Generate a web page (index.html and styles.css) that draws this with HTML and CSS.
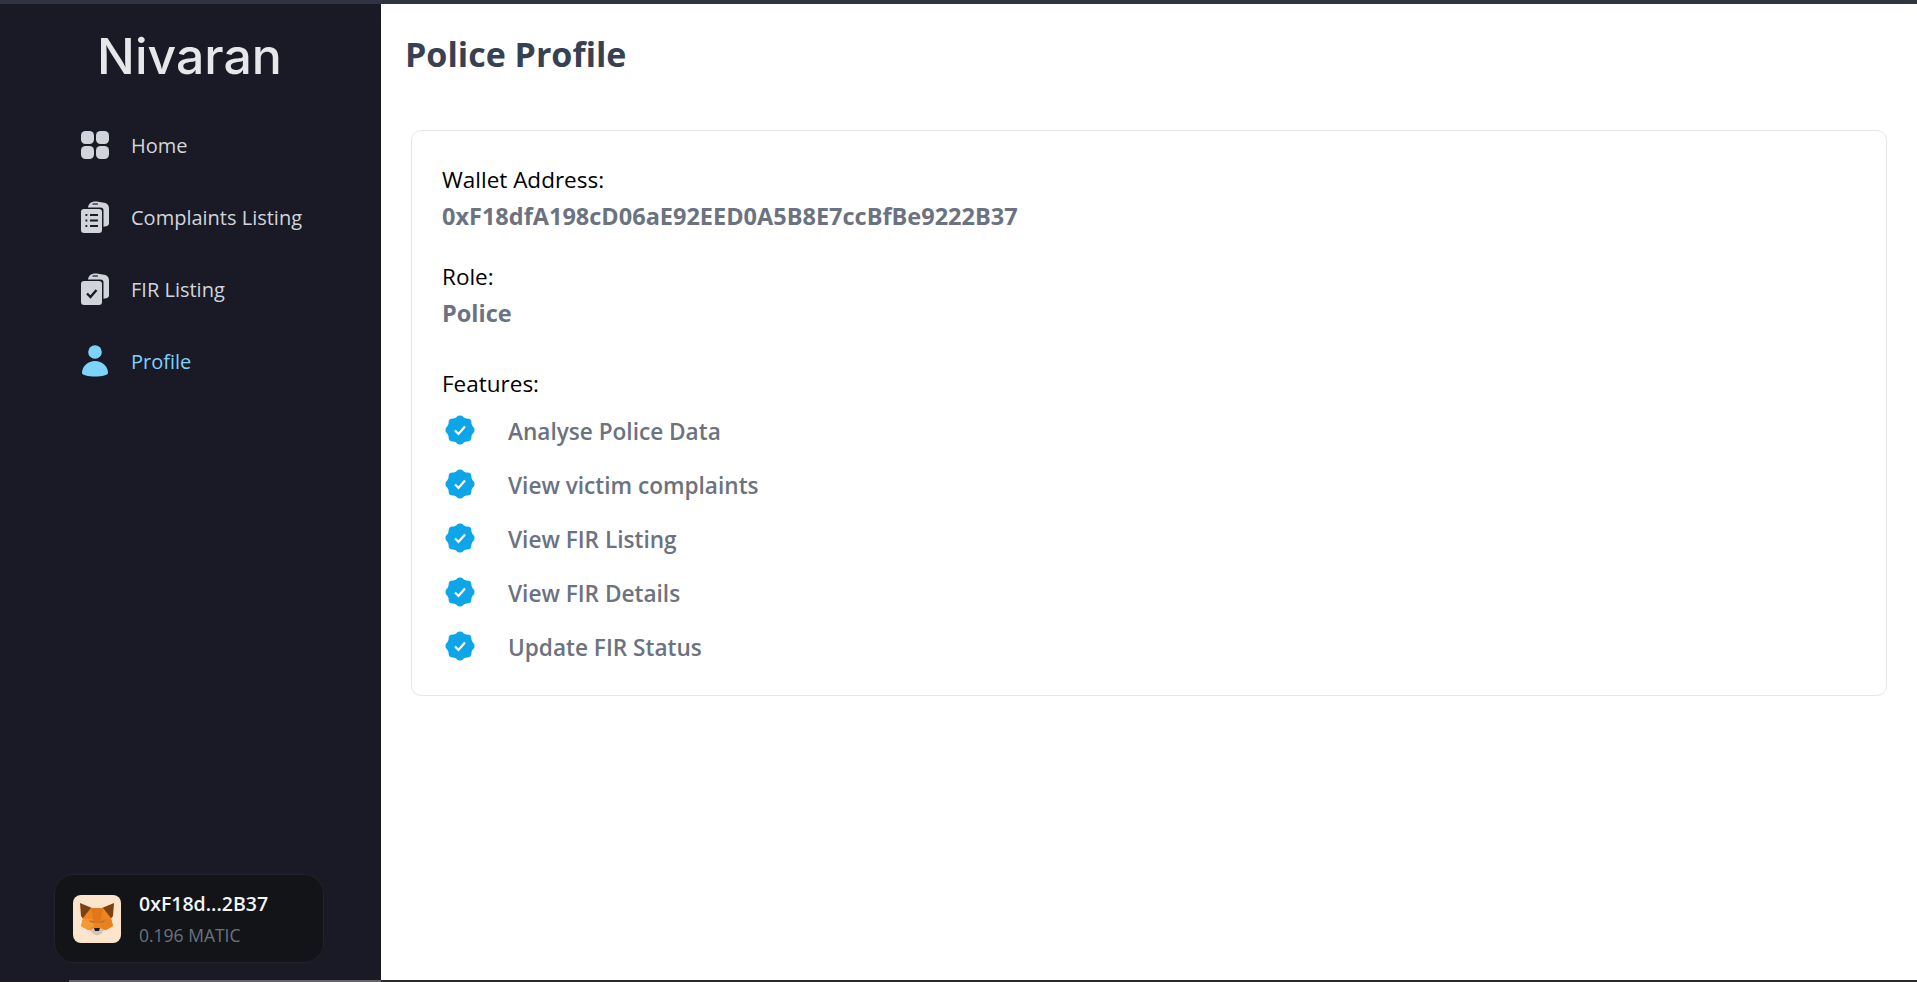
FILE: index.html
```html
<!DOCTYPE html>
<html lang="en">
<head>
    <meta charset="UTF-8">
    <meta name="viewport" content="width=device-width, initial-scale=1.0">
    <title>Nivaran - Police Profile</title>
    <link rel="stylesheet" href="styles.css">
</head>
<body>

<svg class="defs" width="0" height="0">
    <symbol id="check-badge" viewBox="0 0 30 30">
        <circle cx="15" cy="15" r="13" fill="#0ea5e9"/>
        <circle cx="15" cy="4.500" r="4" fill="#0ea5e9"/>
        <circle cx="22.400" cy="7.600" r="4" fill="#0ea5e9"/>
        <circle cx="25.500" cy="15" r="4" fill="#0ea5e9"/>
        <circle cx="22.400" cy="22.400" r="4" fill="#0ea5e9"/>
        <circle cx="15" cy="25.500" r="4" fill="#0ea5e9"/>
        <circle cx="7.600" cy="22.400" r="4" fill="#0ea5e9"/>
        <circle cx="4.500" cy="15" r="4" fill="#0ea5e9"/>
        <circle cx="7.600" cy="7.600" r="4" fill="#0ea5e9"/>
        <path d="M10 15.500l3.500 3.500 6.500-7.500" fill="none" stroke="#fff" stroke-width="2.200"/>
    </symbol>
    <symbol id="back-page" viewBox="0 0 28 32">
        <path d="M7 6.500C7.500 2.500 10.500 .5 14 .5c2.500 0 4 .3 6 .8 4.500 .2 8 1.700 8 6.200v14.500c0 2-1 3.300-5.500 3.800V9.500c0-2-1-3-3-3z" fill="#d1d5db"/>
        <path d="M11.500 3h5.500" stroke="#1a1b26" stroke-width="1.200"/>
    </symbol>
</svg>

<div class="top-strip"></div>

<div class="app">
    <aside class="sidebar">
        <div class="logo">Nivaran</div>

        <nav class="nav">
            <a class="nav-item" href="#">
                <svg class="nav-icon" viewBox="0 0 28 32">
                    <rect x="0" y="2" width="13" height="13" rx="4.5" fill="currentColor"/>
                    <rect x="15" y="2" width="13" height="13" rx="4.5" fill="currentColor"/>
                    <rect x="0" y="17" width="13" height="13" rx="4.5" fill="currentColor"/>
                    <rect x="15" y="17" width="13" height="13" rx="4.5" fill="currentColor"/>
                </svg>
                <span>Home</span>
            </a>
            <a class="nav-item" href="#">
                <svg class="nav-icon" viewBox="0 0 28 32">
                    <use href="#back-page"/>
                    <rect x="0" y="8" width="21" height="24" rx="3" fill="currentColor"/>
                    <path d="M9 14h8M9 19.500h8M9 25h8M4.500 14h1.800M4.500 19.500h1.800M4.500 25h1.800" stroke="#1a1b26" stroke-width="2.200"/>
                </svg>
                <span>Complaints Listing</span>
            </a>
            <a class="nav-item" href="#">
                <svg class="nav-icon" viewBox="0 0 28 32">
                    <use href="#back-page"/>
                    <rect x="0" y="8" width="21" height="24" rx="3" fill="currentColor"/>
                    <path d="M6 20.500l3.500 3.500L15.500 17" fill="none" stroke="#1a1b26" stroke-width="2.400"/>
                </svg>
                <span>FIR Listing</span>
            </a>
            <a class="nav-item active" href="#">
                <svg class="nav-icon" viewBox="0 0 28 32">
                    <circle cx="14" cy="7" r="6.800" fill="currentColor"/>
                    <path d="M1 28c0-7 6-12 13-12s13 5 13 12c0 2-6 3.500-13 3.500S1 30 1 28z" fill="currentColor"/>
                </svg>
                <span>Profile</span>
            </a>
        </nav>

        <div class="wallet">
            <div class="wallet-avatar">
                <svg viewBox="0 0 34 34" width="34" height="34">
                    <polygon points="0,1 12,6 4,18 1,14" fill="#7c4212"/>
                    <polygon points="34,1 22,6 30,18 33,14" fill="#7c4212"/>
                    <polygon points="11,6 23,6 31,16 33,24 26,28 8,28 1,24 3,16" fill="#f0851f"/>
                    <polygon points="11,6 23,6 20,21 14,21" fill="#e2761b"/>
                    <polygon points="3,17 12,17 14,24 8,28 1,24" fill="#f39a33"/>
                    <polygon points="31,17 22,17 20,24 26,28 33,24" fill="#e8811f"/>
                    <polygon points="9,18 14,19.500 14,21 10,20" fill="#a8764a"/>
                    <polygon points="25,18 20,19.500 20,21 24,20" fill="#a8764a"/>
                    <polygon points="10,28 14,26 20,26 24,28 21,32 17,33.500 13,32" fill="#d7c1b3"/>
                    <polygon points="14,26 20,26 19,29 15,29" fill="#1f1a17"/>
                </svg>
            </div>
            <div class="wallet-info">
                <div class="wallet-address">0xF18d...2B37</div>
                <div class="wallet-balance">0.196 MATIC</div>
            </div>
        </div>
    </aside>

    <main class="main">
        <h1 class="page-title">Police Profile</h1>

        <section class="card">
            <p class="label">Wallet Address:</p>
            <p class="value">0xF18dfA198cD06aE92EED0A5B8E7ccBfBe9222B37</p>

            <p class="label label-role">Role:</p>
            <p class="value">Police</p>

            <p class="label label-features">Features:</p>
            <ul class="features">
                <li class="feature"><svg class="badge" viewBox="0 0 30 30"><use href="#check-badge"/></svg>Analyse Police Data</li>
                <li class="feature"><svg class="badge" viewBox="0 0 30 30"><use href="#check-badge"/></svg>View victim complaints</li>
                <li class="feature"><svg class="badge" viewBox="0 0 30 30"><use href="#check-badge"/></svg>View FIR Listing</li>
                <li class="feature"><svg class="badge" viewBox="0 0 30 30"><use href="#check-badge"/></svg>View FIR Details</li>
                <li class="feature"><svg class="badge" viewBox="0 0 30 30"><use href="#check-badge"/></svg>Update FIR Status</li>
            </ul>
        </section>
    </main>
</div>

<div class="bottom-strip">
    <div class="bottom-left"></div>
    <div class="bottom-mid"></div>
</div>

</body>
</html>
```

FILE: styles.css
```css
html, body {
    height: 100%;
}
body {
    font-family: "Open Sans", "Noto Sans", Arial, sans-serif;
    background-color: #fff;
    margin: 0;
    padding: 0;
    color: #000;
    display: flex;
    flex-direction: column;
    overflow: hidden;
}
.top-strip {
    height: 4px;
    background-color: #2f3342;
}
.app {
    flex: 1;
    display: flex;
    min-height: 0;
}
.sidebar {
    width: 381px;
    background-color: #191a25;
    display: flex;
    flex-direction: column;
    align-items: center;
    box-sizing: border-box;
    padding-bottom: 17px;
}
.logo {
    font-family: "Inter", "Open Sans", sans-serif;
    font-size: 50px;
    font-weight: 500;
    line-height: 58px;
    color: #e5e7eb;
    margin-top: 23px;
    margin-left: -2px;
}
.nav {
    align-self: stretch;
    display: flex;
    flex-direction: column;
    gap: 32px;
    padding-left: 81px;
    margin-top: 40px;
    flex: 1;
}
.nav-item {
    display: flex;
    align-items: center;
    gap: 22px;
    height: 40px;
    color: #d1d5db;
    font-size: 20px;
    text-decoration: none;
}
.nav-item.active {
    color: #7dd3fc;
}
.nav-icon {
    width: 28px;
    height: 32px;
    flex-shrink: 0;
}
.wallet {
    align-self: flex-start;
    margin-left: 54px;
    width: 270px;
    height: 89px;
    box-sizing: border-box;
    background-color: #131417;
    border: 1px solid #202230;
    border-radius: 20px;
    display: flex;
    align-items: center;
    gap: 18px;
    padding-left: 18px;
}
.wallet-avatar {
    width: 48px;
    height: 48px;
    background-color: #fde5cd;
    border-radius: 8px;
    display: flex;
    align-items: center;
    justify-content: center;
}
.wallet-address {
    color: #f3f4f6;
    font-size: 19.500px;
    font-weight: 600;
    line-height: 26px;
}
.wallet-balance {
    color: #6b7280;
    font-size: 17.500px;
    line-height: 24px;
    margin-top: 6px;
}
.main {
    flex: 1;
    padding: 0 30px 0 24px;
    min-width: 0;
}
.page-title {
    font-size: 34px;
    font-weight: 700;
    line-height: 40px;
    color: #374151;
    margin: 30px 0 0;
}
.card {
    margin: 56px 0 0 6px;
    height: 566px;
    box-sizing: border-box;
    border: 1px solid #e5e7eb;
    border-radius: 10px;
    padding: 31px 30px 0;
}
.label {
    margin: 0;
    font-size: 22.500px;
    line-height: 36px;
}
.value {
    margin: 0;
    font-size: 23.500px;
    font-weight: 700;
    line-height: 36px;
    color: #6b7280;
}
.label-role {
    margin-top: 25px;
}
.label-features {
    margin-top: 35px;
}
.features {
    list-style: none;
    margin: 2px 0 0;
    padding: 0;
}
.feature {
    display: flex;
    align-items: center;
    height: 54px;
    font-size: 22.600px;
    font-weight: 600;
    color: #6b7280;
}
.badge {
    width: 30px;
    height: 30px;
    margin: -2px 33px 0 3px;
    flex-shrink: 0;
}
.bottom-strip {
    height: 2px;
    display: flex;
    background-color: #2b2b2b;
}
.bottom-left {
    width: 69px;
    background-color: #1c1c1c;
}
.bottom-mid {
    width: 312px;
    background-color: #666;
}
.defs {
    position: absolute;
}
```
